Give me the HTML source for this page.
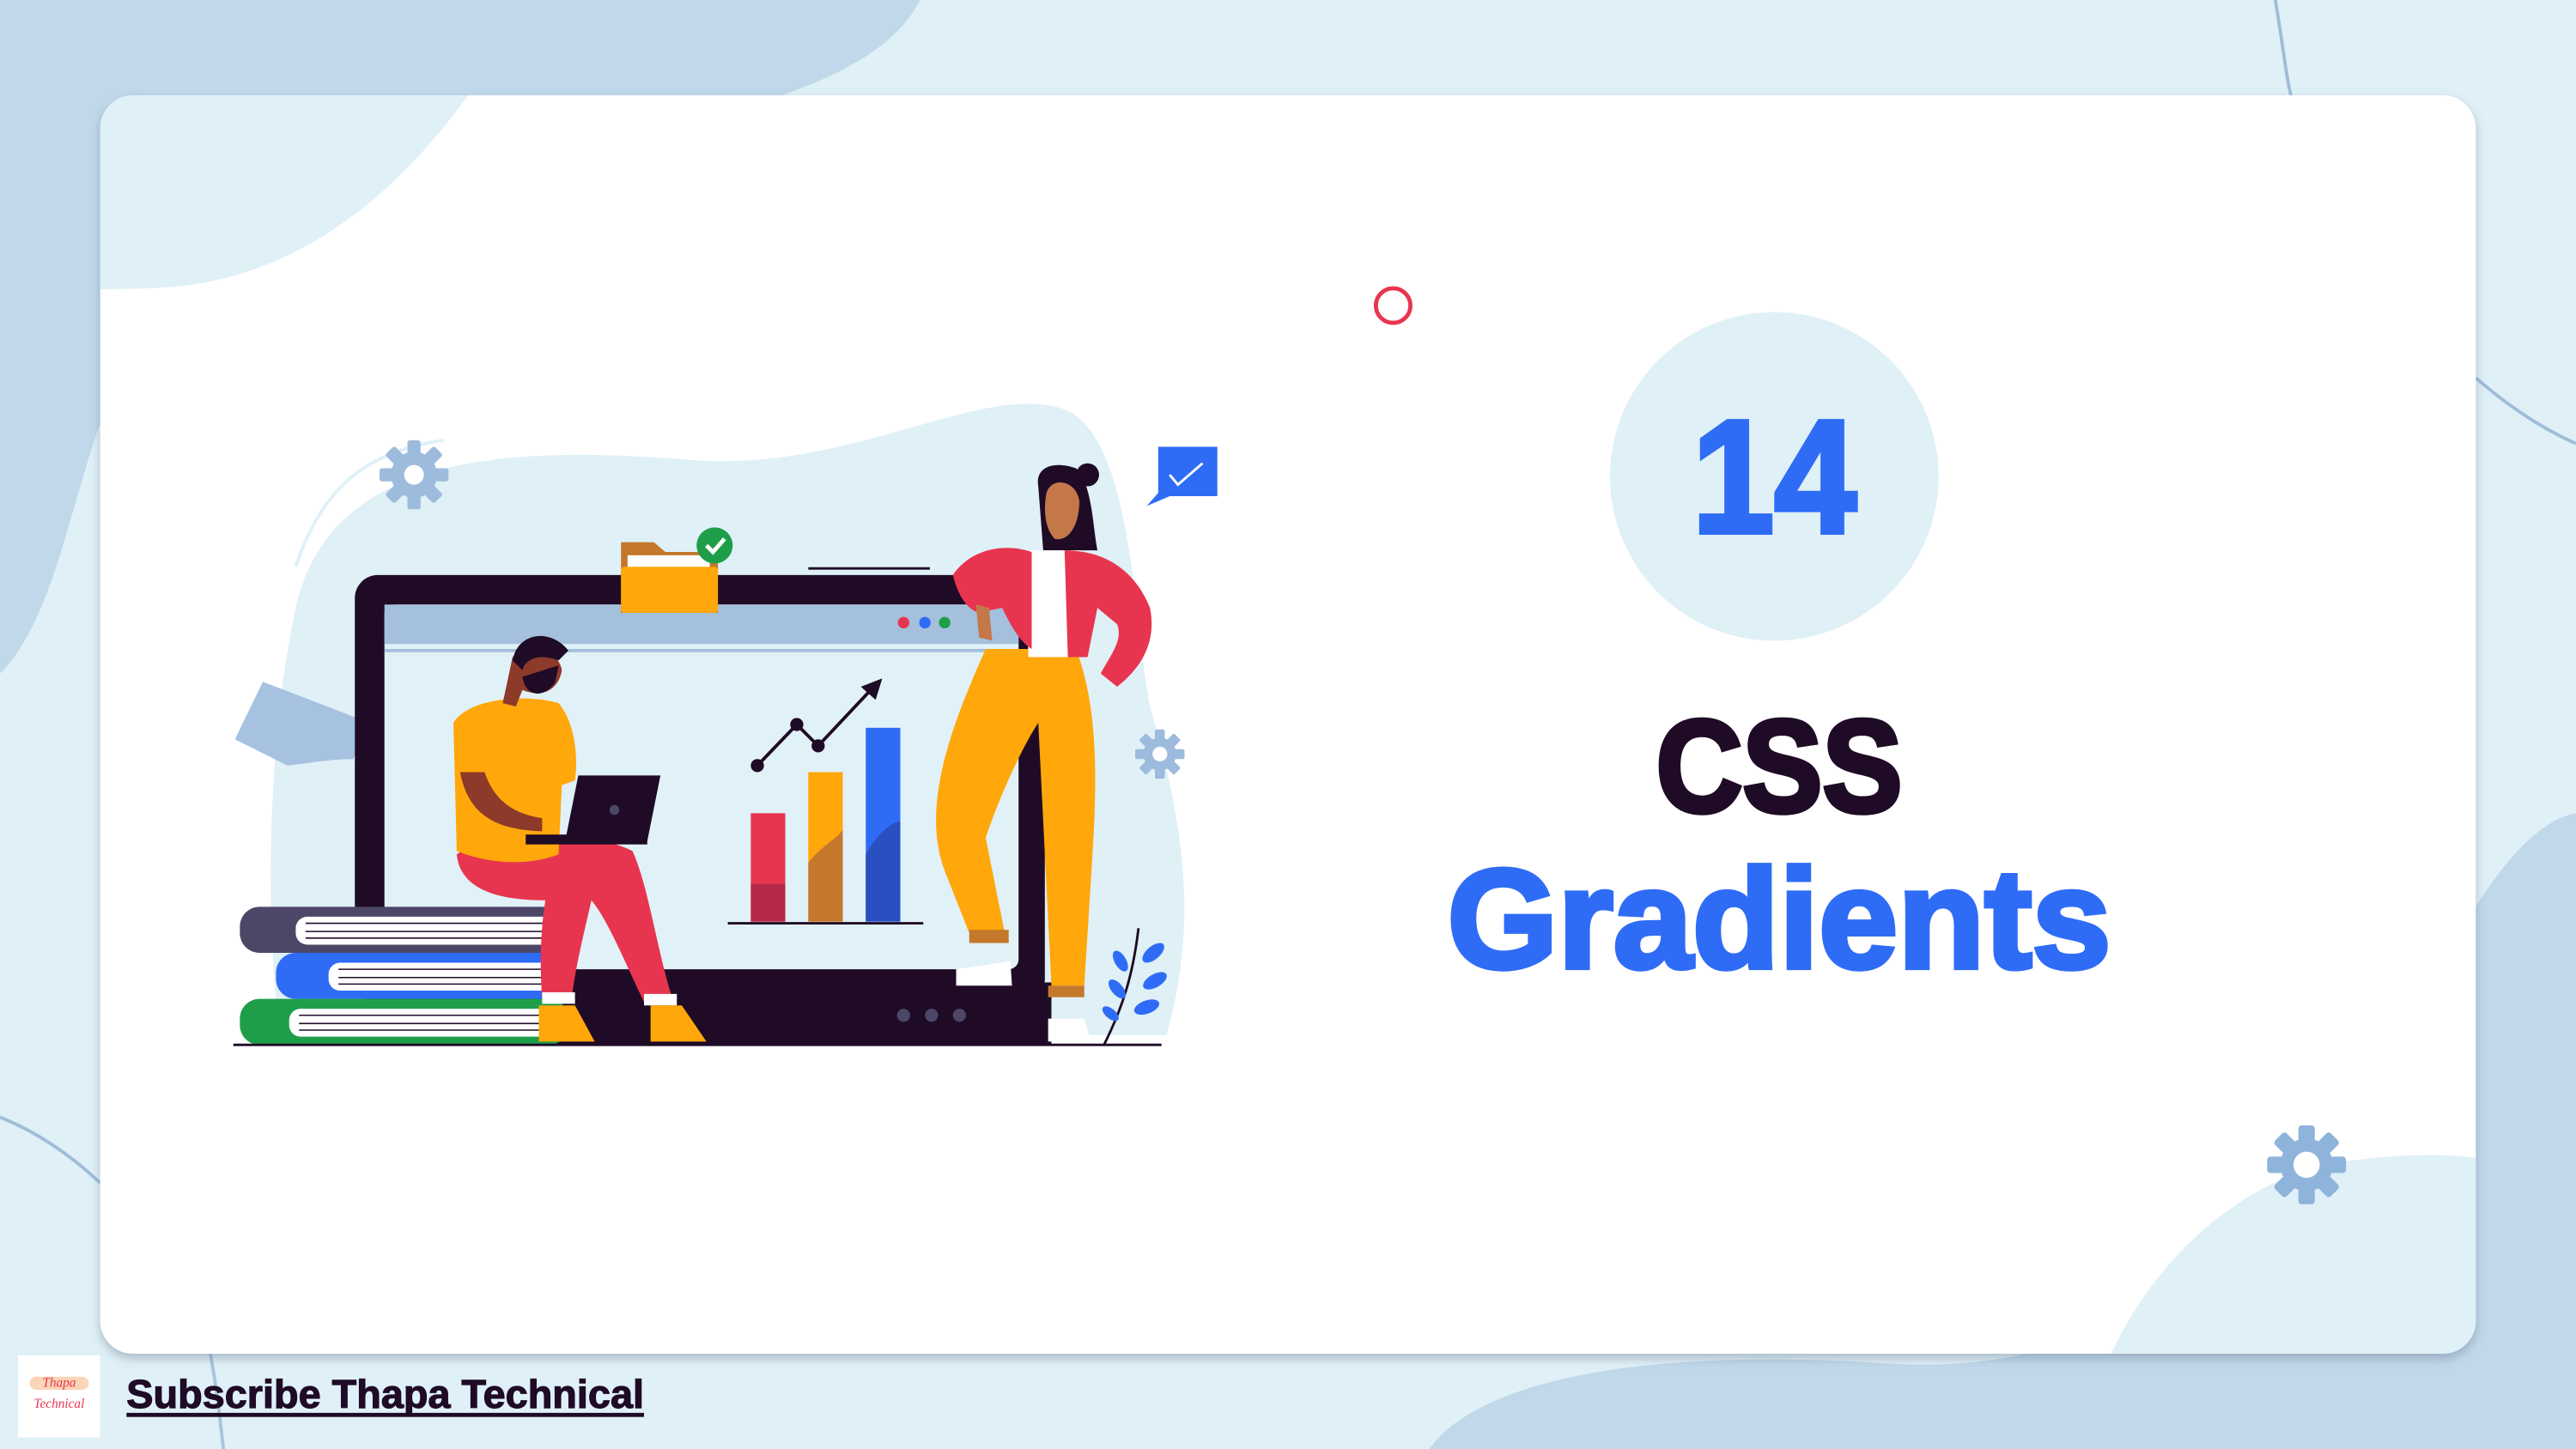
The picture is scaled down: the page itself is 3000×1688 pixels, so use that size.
<!DOCTYPE html>
<html><head><meta charset="utf-8"><style>
html,body{margin:0;padding:0;width:3000px;height:1688px;overflow:hidden;background:#dff0f7}
svg{display:block}
</style></head><body>
<svg width="3000" height="1688" viewBox="0 0 1568 882" preserveAspectRatio="none" xmlns="http://www.w3.org/2000/svg">
<defs>
<filter id="sh" x="-5%" y="-5%" width="110%" height="115%"><feDropShadow dx="0" dy="3" stdDeviation="3" flood-color="#6a7d90" flood-opacity="0.45"/></filter>
<clipPath id="card"><rect x="61" y="58" width="1446" height="766" rx="20"/></clipPath>
</defs>
<rect width="1568" height="882" fill="#dff0f7"/>
<path d="M0 0 H560 C540 40 480 60 400 80 C250 120 120 160 60 260 C40 320 30 380 0 410 Z" fill="#c0d8ea"/>
<path d="M870 882 C900 840 1000 820 1150 830 C1300 840 1420 740 1480 600 C1510 540 1540 500 1568 495 V882 Z" fill="#c0d8ea"/>
<path d="M1385 0 C1390 30 1392 50 1395 60" stroke="#9fbcd8" stroke-width="2" fill="none"/>
<path d="M1507 230 C1530 250 1550 262 1568 270" stroke="#9fbcd8" stroke-width="2" fill="none"/>
<path d="M0 680 C25 690 45 705 61 720" stroke="#9fbcd8" stroke-width="2" fill="none"/>
<path d="M128 824 C132 845 134 865 136 882" stroke="#a8c3dd" stroke-width="2" fill="none"/>
<rect x="61" y="58" width="1446" height="766" rx="20" fill="#fff" filter="url(#sh)"/>
<g clip-path="url(#card)">
<path d="M61 58 H285 C240 120 180 170 100 175 C80 176 70 176 61 176 Z" fill="#dff0f7"/>
<path d="M1285 824 C1310 770 1360 720 1420 708 C1460 702 1490 702 1507 705 V824 Z" fill="#dff0f7"/>
</g>
<circle cx="848" cy="186" r="10.5" fill="none" stroke="#e8354f" stroke-width="2.5"/>
<g transform="translate(1404,709)" fill="#8fb4dc">
<circle r="16"/>
<g id="t"><rect x="-5" y="-24" width="10" height="10" rx="2"/></g>
<use href="#t" transform="rotate(45)"/><use href="#t" transform="rotate(90)"/><use href="#t" transform="rotate(135)"/><use href="#t" transform="rotate(180)"/><use href="#t" transform="rotate(225)"/><use href="#t" transform="rotate(270)"/><use href="#t" transform="rotate(315)"/>
<circle r="8" fill="#fff"/>
</g>
<circle cx="1080" cy="290" r="100" fill="#dff0f7"/>
<text x="1080" y="324" text-anchor="middle" font-family="Liberation Sans, sans-serif" font-weight="bold" font-size="98" fill="#2f6cf6" stroke="#2f6cf6" stroke-width="3" textLength="100" lengthAdjust="spacingAndGlyphs">14</text>
<text x="1083" y="494" text-anchor="middle" font-family="Liberation Sans, sans-serif" font-weight="bold" font-size="80" fill="#1f0b26" stroke="#1f0b26" stroke-width="3" textLength="150" lengthAdjust="spacingAndGlyphs">CSS</text>
<text x="1083" y="589" text-anchor="middle" font-family="Liberation Sans, sans-serif" font-weight="bold" font-size="86" fill="#2f6cf6" stroke="#2f6cf6" stroke-width="3" textLength="404" lengthAdjust="spacingAndGlyphs">Gradients</text>
<path d="M180 370 C200 280 300 270 420 280 C520 288 600 230 650 250 C690 270 690 380 700 430 C720 500 730 560 710 630 L170 630 C160 540 165 440 180 370Z" fill="#dff0f7"/>
<path d="M180 345 C195 300 220 275 270 268" stroke="#dff0f7" stroke-width="2" fill="none"/>
<g transform="translate(252,289)" fill="#9dbbdc">
<circle r="14"/>
<g id="t2"><rect x="-4" y="-21" width="8" height="9" rx="1.5"/></g>
<use href="#t2" transform="rotate(45)"/><use href="#t2" transform="rotate(90)"/><use href="#t2" transform="rotate(135)"/><use href="#t2" transform="rotate(180)"/><use href="#t2" transform="rotate(225)"/><use href="#t2" transform="rotate(270)"/><use href="#t2" transform="rotate(315)"/>
<circle r="6" fill="#fff"/>
</g>
<g transform="translate(706,459)" fill="#9dbbdc">
<circle r="10"/>
<g id="t3"><rect x="-3" y="-15" width="6" height="7" rx="1"/></g>
<use href="#t3" transform="rotate(45)"/><use href="#t3" transform="rotate(90)"/><use href="#t3" transform="rotate(135)"/><use href="#t3" transform="rotate(180)"/><use href="#t3" transform="rotate(225)"/><use href="#t3" transform="rotate(270)"/><use href="#t3" transform="rotate(315)"/>
<circle r="4.5" fill="#fff"/>
</g>
<path d="M160 415 L225 440 L215 462 C200 462 185 465 175 466 L143 450 Z" fill="#a6c2e0"/>
<rect x="216" y="350" width="420" height="260" rx="14" fill="#1f0b26"/>
<rect x="234" y="368" width="386" height="222" rx="6" fill="#e1f1f8"/>
<rect x="234" y="368" width="386" height="24" fill="#a5c0dc"/>
<line x1="234" y1="396" x2="620" y2="396" stroke="#a5c0dc" stroke-width="2"/>
<circle cx="550" cy="379" r="3.5" fill="#e8354f"/><circle cx="563" cy="379" r="3.5" fill="#2f6cf6"/><circle cx="575" cy="379" r="3.5" fill="#1f9e4a"/>
<rect x="300" y="598" width="340" height="38" fill="#1f0b26"/>
<circle cx="550" cy="618" r="4" fill="#4c4766"/><circle cx="567" cy="618" r="4" fill="#4c4766"/><circle cx="584" cy="618" r="4" fill="#4c4766"/>
<line x1="492" y1="346" x2="566" y2="346" stroke="#1f0b26" stroke-width="1.5"/>
<path d="M378 330 H398 L405 336 H437 V373 H378 Z" fill="#c4782c"/>
<rect x="382" y="338" width="50" height="10" fill="#fff"/>
<rect x="378" y="345" width="59" height="28" rx="2" fill="#ffa70b"/>
<circle cx="435" cy="332" r="11" fill="#1f9e4a"/>
<path d="M430 332 L434 336 L441 328" stroke="#fff" stroke-width="2.5" fill="none"/>
<rect x="457" y="495" width="21" height="66" fill="#e8354f"/><rect x="457" y="538" width="21" height="23" fill="#b62a48"/>
<rect x="492" y="470" width="21" height="91" fill="#ffa70b"/><path d="M492 561 V525 C500 515 510 510 513 505 V561Z" fill="#c4782c"/>
<rect x="527" y="443" width="21" height="118" fill="#2f6cf6"/><path d="M527 561 V520 C535 505 545 500 548 500 V561Z" fill="#2a4fc0"/>
<line x1="443" y1="562" x2="562" y2="562" stroke="#1f0b26" stroke-width="1.5"/>
<polyline points="461,466 485,441 498,454 530,420" stroke="#1f0b26" stroke-width="2" fill="none"/>
<circle cx="461" cy="466" r="4" fill="#1f0b26"/><circle cx="485" cy="441" r="4" fill="#1f0b26"/><circle cx="498" cy="454" r="4" fill="#1f0b26"/>
<path d="M537 413 L524 418 L533 426Z" fill="#1f0b26"/>
<rect x="146" y="552" width="200" height="28" rx="12" fill="#4c4766"/><rect x="180" y="558" width="166" height="17" rx="7" fill="#fff"/>
<rect x="168" y="580" width="180" height="28" rx="12" fill="#2f6cf6"/><rect x="200" y="586" width="148" height="17" rx="7" fill="#fff"/>
<rect x="146" y="608" width="200" height="28" rx="12" fill="#1f9e4a"/><rect x="176" y="614" width="170" height="17" rx="7" fill="#fff"/>
<g stroke="#1f0b26" stroke-width="0.8"><line x1="186" y1="562" x2="340" y2="562"/><line x1="186" y1="567" x2="340" y2="567"/><line x1="186" y1="571" x2="340" y2="571"/><line x1="206" y1="590" x2="340" y2="590"/><line x1="206" y1="595" x2="340" y2="595"/><line x1="206" y1="599" x2="340" y2="599"/><line x1="182" y1="618" x2="340" y2="618"/><line x1="182" y1="623" x2="340" y2="623"/><line x1="182" y1="627" x2="340" y2="627"/></g>
<line x1="142" y1="636" x2="707" y2="636" stroke="#1f0b26" stroke-width="1.5"/>
<path d="M278 520 C300 505 360 505 385 518 C395 540 400 580 410 610 L393 612 C380 585 370 560 360 548 C355 570 350 590 348 608 L330 608 C328 580 330 560 332 548 C300 548 280 540 278 520Z" fill="#e8354f"/>
<rect x="330" y="604" width="20" height="7" fill="#fff"/><rect x="392" y="605" width="20" height="7" fill="#fff"/>
<path d="M328 612 L350 612 L362 634 L328 634Z" fill="#ffa70b"/><path d="M396 612 L415 612 L430 634 L396 634Z" fill="#ffa70b"/>
<path d="M276 440 C285 425 320 422 340 428 C350 440 352 460 350 475 L342 478 L340 520 C320 528 295 525 278 518 Z" fill="#ffa70b"/>
<path d="M280 470 C285 495 300 505 330 506 L330 498 C310 495 300 485 295 470Z" fill="#8d3a2a"/>
<path d="M312 400 C320 390 340 395 342 408 C340 420 330 425 318 420 L314 430 L306 428 Z" fill="#8d3a2a"/>
<path d="M312 402 C315 385 335 382 346 396 L340 402 C330 398 320 400 318 408Z" fill="#1f0b26"/>
<path d="M318 412 C320 425 332 425 338 415 L340 405Z" fill="#1f0b26"/>
<path d="M352 472 L402 472 L394 512 L344 512Z" fill="#1f0b26"/>
<rect x="320" y="508" width="74" height="6" fill="#1f0b26"/>
<circle cx="374" cy="493" r="3" fill="#4c4766"/>
<path d="M600 395 C580 440 560 490 575 530 L590 568 L612 570 L600 510 C610 480 625 450 632 440 L640 600 L660 600 L665 520 C668 470 668 430 655 395Z" fill="#ffa70b"/>
<rect x="590" y="566" width="24" height="8" fill="#c4782c"/><rect x="638" y="600" width="22" height="7" fill="#c4782c"/>
<path d="M582 590 L615 585 L616 600 L582 600Z" fill="#fff"/><path d="M638 620 L660 620 L664 634 L638 634Z" fill="#fff"/>
<path d="M632 296 C630 285 640 280 655 285 C665 295 665 320 668 335 L635 335Z" fill="#1f0b26"/>
<circle cx="662" cy="289" r="7" fill="#1f0b26"/>
<path d="M637 300 C640 290 655 292 657 305 C657 320 650 330 642 328 C636 322 635 310 637 300Z" fill="#c4784a"/>
<path d="M624 335 H658 L660 400 H626Z" fill="#fff"/>
<path d="M580 350 C590 335 610 330 628 336 L628 395 C620 390 615 380 610 370 L600 372 C595 375 585 370 580 350Z" fill="#e8354f"/>
<path d="M648 335 C670 335 690 345 700 370 C705 395 690 410 680 418 L670 410 C675 400 684 390 680 380 L668 370 L662 400 H650Z" fill="#e8354f"/>
<path d="M594 368 L602 370 L604 390 L596 388Z" fill="#c4784a"/>
<path d="M705 272 H741 V302 H712 L698 308 L705 300Z" fill="#2f6cf6"/>
<path d="M712 289 L717 295 L732 282" stroke="#fff" stroke-width="1.5" fill="none"/>
<path d="M672 636 C685 610 690 590 693 565" stroke="#1f0b26" stroke-width="1.5" fill="none"/>
<g fill="#2f6cf6"><ellipse cx="702" cy="580" rx="8" ry="4" transform="rotate(-40 702 580)"/><ellipse cx="703" cy="597" rx="8" ry="4" transform="rotate(-30 703 597)"/><ellipse cx="698" cy="613" rx="8" ry="4" transform="rotate(-20 698 613)"/><ellipse cx="682" cy="585" rx="7" ry="3.5" transform="rotate(60 682 585)"/><ellipse cx="680" cy="602" rx="7" ry="3.5" transform="rotate(50 680 602)"/><ellipse cx="676" cy="617" rx="6" ry="3" transform="rotate(40 676 617)"/></g>
<rect x="11" y="825" width="50" height="50" fill="#fff"/>
<rect x="18" y="838" width="36" height="8" rx="4" fill="#fbd5b8"/>
<text x="36" y="844" text-anchor="middle" font-family="Liberation Serif, serif" font-style="italic" font-size="8" fill="#e8354f">Thapa</text>
<text x="36" y="857" text-anchor="middle" font-family="Liberation Serif, serif" font-style="italic" font-size="8" fill="#e8354f">Technical</text>
<text x="77" y="857" font-family="Liberation Sans, sans-serif" font-weight="bold" font-size="24" fill="#1f0b26" stroke="#1f0b26" stroke-width="0.6" textLength="315" lengthAdjust="spacingAndGlyphs">Subscribe Thapa Technical</text>
<rect x="77" y="860" width="315" height="2.5" fill="#1f0b26"/>
</svg>
</body></html>
